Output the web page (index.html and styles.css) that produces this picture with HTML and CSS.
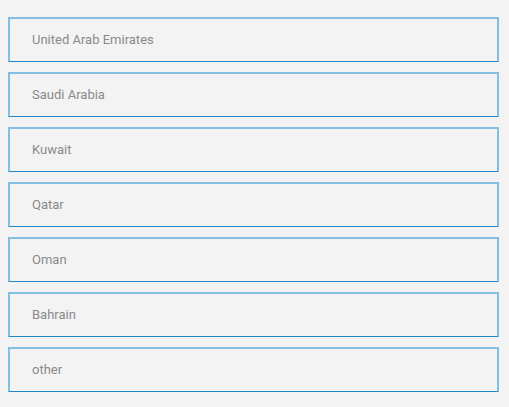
FILE: index.html
```html
<!DOCTYPE html>
<html>
<head>
<meta charset="utf-8">
<link rel="stylesheet" href="styles.css">
</head>
<body>
<div class="list">
  <div class="option">United Arab Emirates</div>
  <div class="option">Saudi Arabia</div>
  <div class="option">Kuwait</div>
  <div class="option">Qatar</div>
  <div class="option">Oman</div>
  <div class="option">Bahrain</div>
  <div class="option">other</div>
</div>
</body>
</html>
```
FILE: styles.css
```css
html, body {
  margin: 0;
  padding: 0;
  background: #f3f3f3;
}
.list {
  display: flex;
  flex-direction: column;
  gap: 10px;
  padding: 17px 0 0 8px;
  width: 491px;
}
.option {
  box-sizing: border-box;
  height: 45px;
  border: 2px solid #82bfe2;
  border-bottom: 1px solid #2386c6;
  padding-left: 22px;
  padding-bottom: 2px;
  display: flex;
  align-items: center;
  font-family: Roboto, "Liberation Sans", sans-serif;
  font-size: 13px;
  color: #8a8a8a;
}
```
